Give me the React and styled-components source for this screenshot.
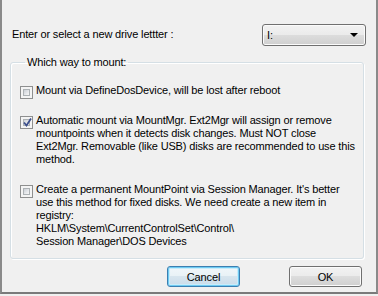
import React from "react";
import styled, { createGlobalStyle } from "styled-components";

const Global = createGlobalStyle`
  html, body { margin: 0; padding: 0; background: #f0f0f0; }
  body { font-family: "Liberation Sans", Arial, sans-serif; font-size: 11px; letter-spacing: -0.15px; color: #000; }
  * { box-sizing: border-box; }
`;

const Window = styled.div`
  width: 378px;
  height: 294px;
  background: #f0f0f0;
  border-left: 2px solid #8a8a8a;
  border-right: 2px solid #8a8a8a;
  border-bottom: 2px solid #7a7a7a;
  padding: 24px 10px 0 8px;
  display: flex;
  flex-direction: column;
`;

const TopRow = styled.div`
  display: flex;
  align-items: center;
  justify-content: space-between;
  height: 22px;
`;

const Label = styled.span`
  line-height: 13px;
  padding-left: 2px;
  margin-top: -2px;
`;

const buttonFace = `
  border: 1px solid #707070;
  border-radius: 3px;
  box-shadow: inset 0 0 0 1px #fbfbfb;
  background: linear-gradient(#f2f2f2 0%, #ebebeb 50%, #dddddd 50%, #cfcfcf 100%);
`;

const Combo = styled.div`
  ${buttonFace}
  width: 104px;
  height: 22px;
  display: flex;
  align-items: center;
  justify-content: space-between;
  padding: 0 7px 0 4px;
  line-height: 13px;
`;

const Arrow = styled.span`
  width: 0;
  height: 0;
  border-left: 4px solid transparent;
  border-right: 4px solid transparent;
  border-top: 4px solid #000;
`;

const Group = styled.fieldset`
  margin: 10px 2px 0 0;
  padding: 0 0 10px 9px;
  border: 1px solid #d5dfe5;
  border-radius: 3px;
  box-shadow: inset 1px 1px 0 #fff, 1px 1px 0 #fff;
  min-width: 0;
`;

const Legend = styled.legend`
  margin-left: 5px;
  padding: 0 2px;
  line-height: 13px;
`;

const Options = styled.div`
  display: flex;
  flex-direction: column;
  gap: 17px;
  margin-top: 15px;
`;

const Option = styled.label`
  display: flex;
  align-items: flex-start;
  gap: 3px;
  line-height: 13px;
`;

const Box = styled.span`
  flex: none;
  width: 13px;
  height: 13px;
  margin: 2px 0 -2px;
  border: 1px solid #8e8f8f;
  background: #f4f4f4;
  padding: 2px;
  display: flex;
`;

const BoxInner = styled.span`
  flex: 1;
  border: 1px solid #adb2b5;
  background: linear-gradient(135deg, #cbcfd5 0%, #e7e9ec 60%, #f6f6f6 100%);
  position: relative;
`;

const Check = styled.svg`
  position: absolute;
  left: -2px;
  top: -3px;
`;

const Text = styled.span`
  width: 322px;
`;

const Buttons = styled.div`
  display: flex;
  justify-content: flex-end;
  gap: 49px;
  margin-top: 7px;
  padding-right: 4px;
`;

const Button = styled.button`
  ${buttonFace}
  width: 73px;
  height: 21px;
  font: inherit;
  font-size: 11px;
  letter-spacing: -0.15px;
  color: #000;
  padding: 0;
  ${(p) =>
    p.$default &&
    `
    border-color: #3c7fb1;
    box-shadow: inset 0 0 0 1px #6fcbf2, inset 0 0 0 2px #c8ecfb;
    background: linear-gradient(#f1f7fa 0%, #e8f1f6 50%, #d7e5ee 50%, #cadcea 100%);
  `}
`;

function CheckBox({ checked }) {
  return (
    <Box>
      <BoxInner>
        {checked && (
          <Check width="11" height="11" viewBox="0 0 11 11">
            <path d="M2 5.5 L4.5 8.5 L9 1.5" fill="none" stroke="#3c4f8c" strokeWidth="1.8" />
          </Check>
        )}
      </BoxInner>
    </Box>
  );
}

export default function App() {
  return (
    <>
      <Global />
      <Window>
        <TopRow>
          <Label>Enter or select a new drive lettter :</Label>
          <Combo>
            <span>I:</span>
            <Arrow />
          </Combo>
        </TopRow>
        <Group>
          <Legend>Which way to mount:</Legend>
          <Options>
            <Option>
              <CheckBox />
              <Text>Mount via DefineDosDevice, will be lost after reboot</Text>
            </Option>
            <Option>
              <CheckBox checked />
              <Text>
                Automatic mount via MountMgr. Ext2Mgr will assign or remove mountpoints when it detects disk
                changes. Must NOT close Ext2Mgr. Removable (like USB) disks are recommended to use this method.
              </Text>
            </Option>
            <Option>
              <CheckBox />
              <Text>
                Create a permanent MountPoint via Session Manager. It's better use this method for fixed disks. We
                need create a new item in registry:
                <br />
                HKLM\System\CurrentControlSet\Control\
                <br />
                Session Manager\DOS Devices
              </Text>
            </Option>
          </Options>
        </Group>
        <Buttons>
          <Button $default>Cancel</Button>
          <Button>OK</Button>
        </Buttons>
      </Window>
    </>
  );
}
